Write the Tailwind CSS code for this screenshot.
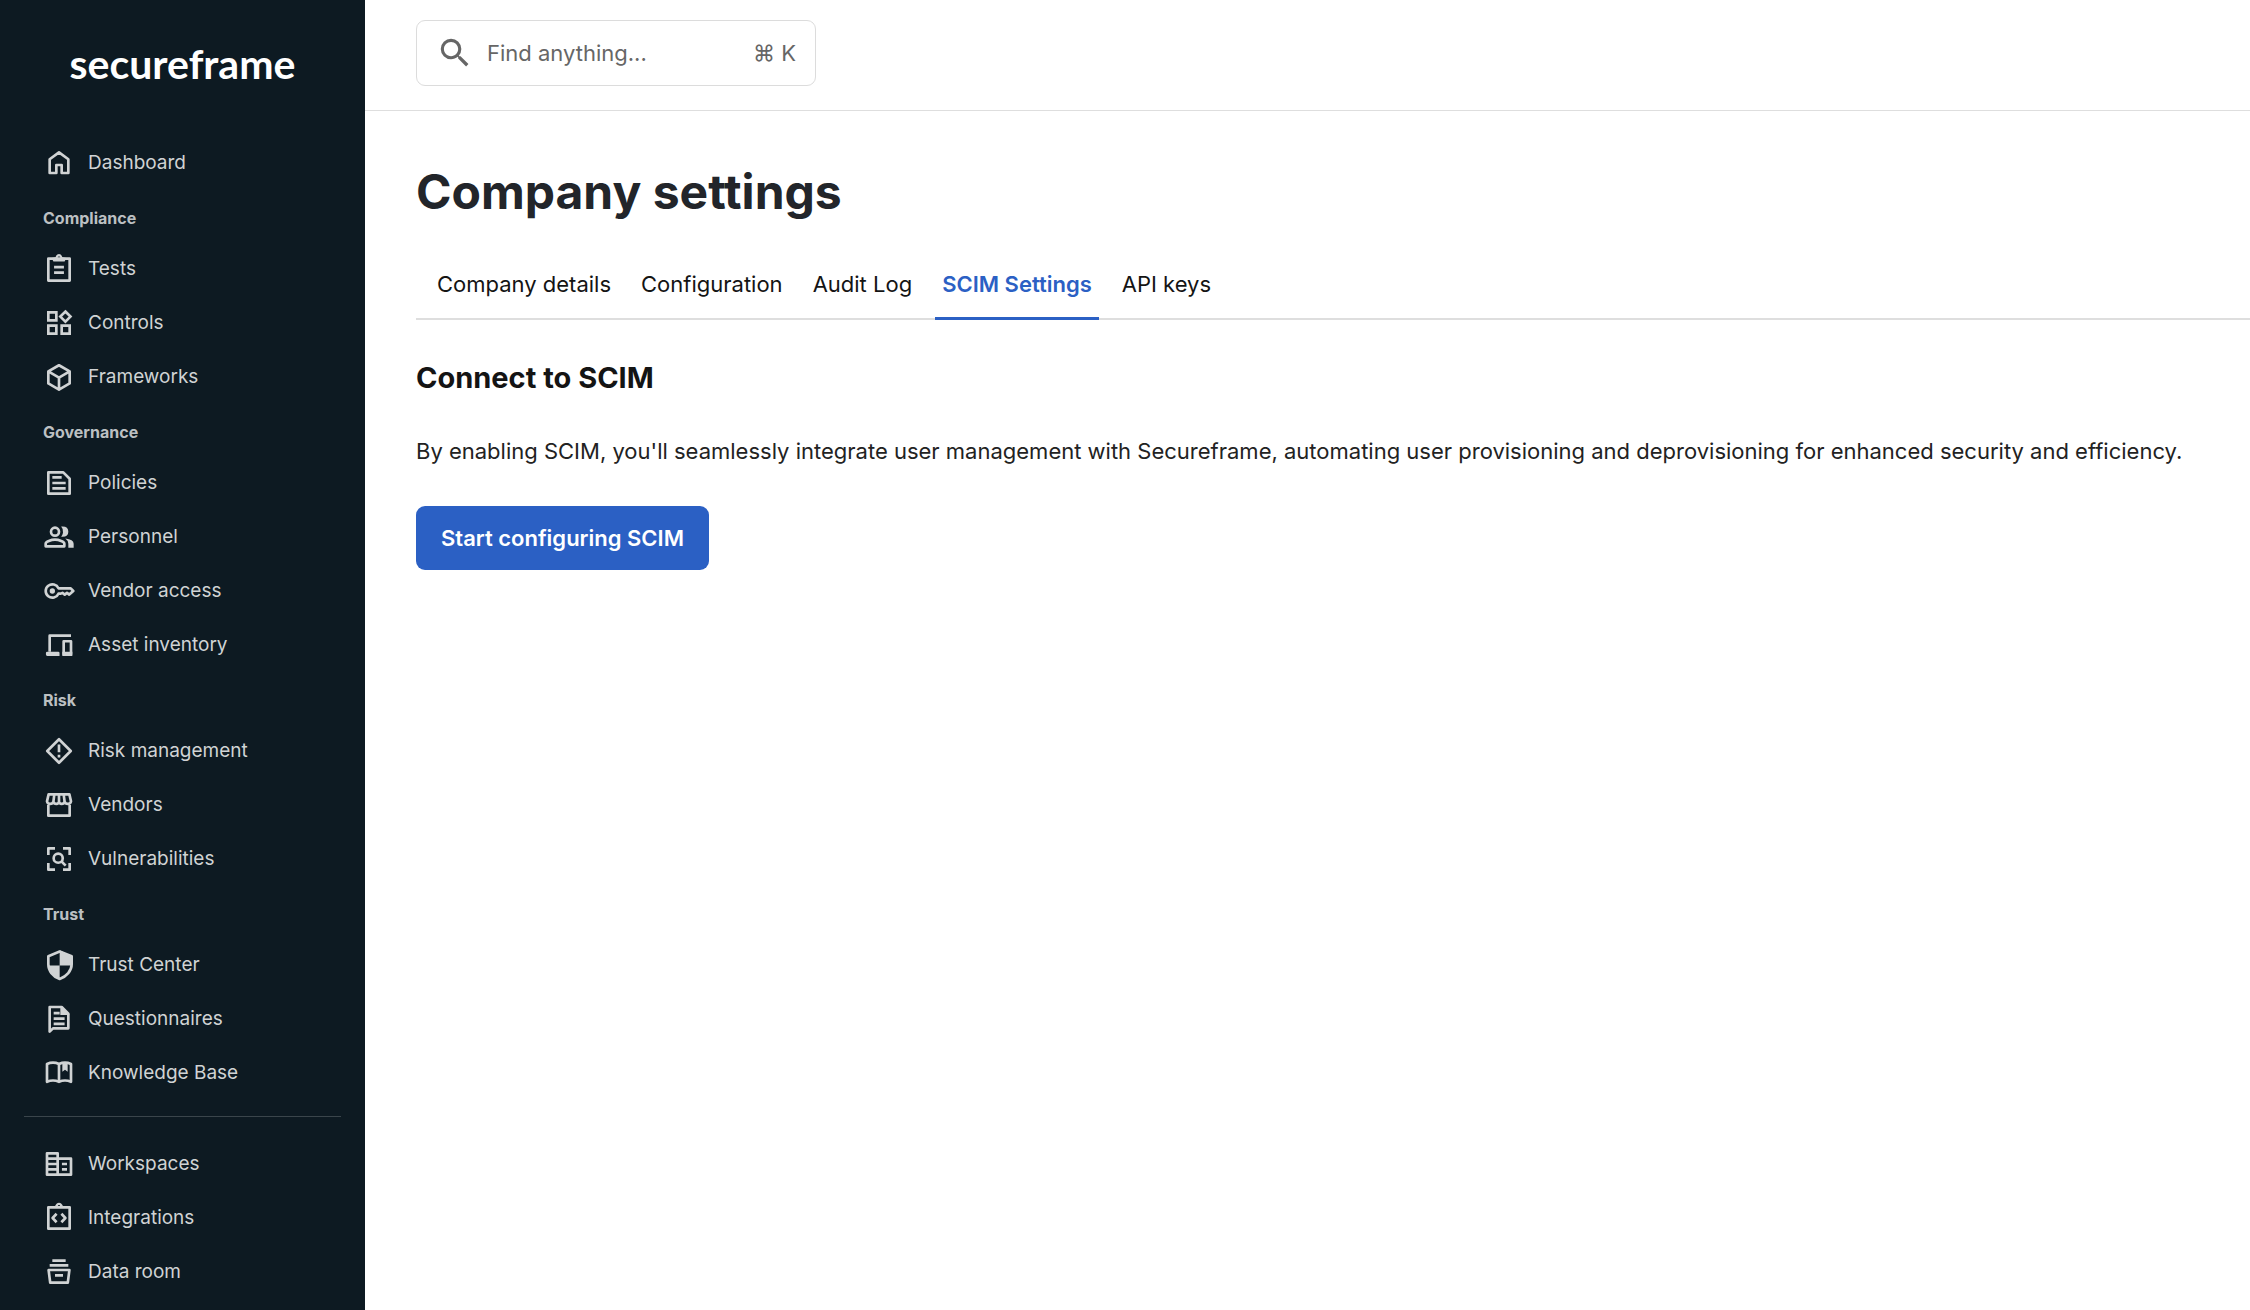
<!DOCTYPE html>
<html lang="en">
<head>
    <meta charset="UTF-8">
    <meta name="viewport" content="width=device-width, initial-scale=1.0">
    <title>Company settings - Secureframe</title>
    <script src="https://cdn.jsdelivr.net/npm/@tailwindcss/browser@4"></script>
</head>
<body class="flex min-h-screen bg-white font-[Inter,sans-serif] text-[#141414]">

    <!-- Sidebar -->
    <aside class="w-[365px] shrink-0 bg-[#0d1a22] text-[#d0d3d4]">
        <a href="#" class="flex h-[136px] justify-center pt-9 font-[Lato,sans-serif] text-[41px] leading-[56px] font-bold text-white">secureframe</a>

        <nav class="text-[19px] [&_a]:flex [&_a]:h-[54px] [&_a]:items-center [&_a]:gap-[13px] [&_a]:px-[43px] [&_a:hover]:text-white [&_h2]:flex [&_h2]:h-[52px] [&_h2]:items-center [&_h2]:px-[43px] [&_h2]:pt-1 [&_h2]:text-base [&_h2]:font-bold [&_h2]:text-[#bcc0c2] [&_svg]:size-8 [&_svg]:shrink-0 [&_svg]:fill-none [&_svg]:stroke-current [&_svg]:stroke-2">
            <a href="#">
                <svg viewBox="0 0 24 24" stroke-linejoin="round"><path d="M5 9.2 12 4l7 5.200V19.500h-5v-6h-4v6H5Z"/></svg>
                Dashboard
            </a>

            <h2>Compliance</h2>
            <a href="#">
                <svg viewBox="0 0 24 24" stroke-linejoin="round"><path d="M4 4.200h16V20.700H4Z"/><path d="M8.300 10.600h7.400M8.300 14.700h7.400"/><path fill="currentColor" stroke="none" fill-rule="evenodd" d="M6.500 3.800l2.900-.7Q10.200.8 12 .8t2.600 2.300l2.900.7-1.300 2.600H7.800ZM12 2.600a1 1 0 1 0 0 2 1 1 0 0 0 0-2Z"/></svg>
                Tests
            </a>
            <a href="#">
                <svg viewBox="0 0 24 24"><path d="M4 4h6v6H4ZM4 14h6v6H4ZM14 14h6v6h-6ZM16.800 3.400 20.600 7.200 16.800 11 13 7.200Z"/></svg>
                Controls
            </a>
            <a href="#">
                <svg viewBox="0 0 24 24" stroke-linejoin="round"><path d="M12 3.200 20 7.800v9L12 21.400 4 16.800v-9ZM4 7.800l8 4.600 8-4.600M12 12.400v9"/></svg>
                Frameworks
            </a>

            <h2>Governance</h2>
            <a href="#">
                <svg viewBox="0 0 24 24" stroke-linejoin="round"><path d="M4 4h11.200L20 8.800V20H4ZM7 7.800h7M7 12h10M7 16h10"/></svg>
                Policies
            </a>
            <a href="#">
                <svg viewBox="0 0 24 24" stroke-linejoin="round"><circle cx="9" cy="8" r="3"/><path d="M2 19v-2c0-1.400 4-3 7-3s7 1.600 7 3v2Z"/><path fill="currentColor" stroke="none" d="M13.600 4.200Q15.400 6 15 8.800 14.700 10.500 13.600 11.800 19 12.300 19 8T13.600 4.200ZM16.700 13.200Q19 14.800 19 17v3h4v-3Q23 14 16.700 13.200Z"/></svg>
                Personnel
            </a>
            <a href="#">
                <svg viewBox="0 0 24 24" stroke-linejoin="round"><path d="M11.600 10H20.800L22.700 12l-3 2.700-1.700-1.300-1.700 1.300-1.700-1.300-1.200.6h-1.800a5 5 0 1 1 0-4Z"/><circle cx="7" cy="12" r="2" fill="currentColor" stroke="none"/></svg>
                Vendor access
            </a>
            <a href="#">
                <svg viewBox="0 0 24 24" stroke-linejoin="round"><path d="M21 5H5v12M15.500 9.200H21V19h-5.500Z"/><path fill="currentColor" stroke="none" d="M3.200 17h8.200a1 1 0 0 1 1 1v2.200H3.200a1 1 0 0 1-1-1V18a1 1 0 0 1 1-1ZM14.500 17H22v3.200h-7.500Z"/></svg>
                Asset inventory
            </a>

            <h2>Risk</h2>
            <a href="#">
                <svg viewBox="0 0 24 24" stroke-linejoin="round"><path d="M12 3.200 20.800 12 12 20.800 3.200 12ZM12 7.200v5.800M12 14.800v2"/></svg>
                Risk management
            </a>
            <a href="#">
                <svg viewBox="0 0 24 24" stroke-linejoin="round"><path d="M4 12v8h16v-8"/><path d="M4.200 4h15.600L21 9.300Q20.700 11.200 18.700 11.200T16.200 9.500Q15.800 11.200 14 11.200T12 9.500Q11.800 11.200 10 11.200T7.800 9.500Q7.300 11.200 5.300 11.200T3 9.300ZM8.500 4l-.7 5.500M12 4v5.500M15.500 4l.7 5.500"/></svg>
                Vendors
            </a>
            <a href="#">
                <svg viewBox="0 0 24 24" stroke-linejoin="round"><path d="M4 9V4h5M15 4h5v5M20 15v5h-5M9 20H4v-5"/><circle cx="11.400" cy="11.400" r="3.400"/><path d="m13.800 13.800 3.200 3.200"/></svg>
                Vulnerabilities
            </a>

            <h2>Trust</h2>
            <a href="#">
                <svg viewBox="0 0 24 24" stroke-linejoin="round"><path d="m12.500 1.900 9 3.600v6c0 4.800-3.800 9.200-9 11-5.200-1.800-8.500-6.200-8.500-11v-6Z"/><path fill="currentColor" stroke="none" d="M12.500 1v11.300h9V5.500ZM12.500 12.300H4q.5 6.500 8.500 10.200Z"/></svg>
                Trust Center
            </a>
            <a href="#">
                <svg viewBox="0 0 24 24" stroke-linejoin="round"><path d="M5 3h9l5 5v11H7.500L5 21.500ZM8 7.600h4.500M8 11.700h8.200M8 15.600h8.200"/><path fill="currentColor" stroke="none" d="M13 2v7h7Z"/></svg>
                Questionnaires
            </a>
            <a href="#">
                <svg viewBox="0 0 24 24" stroke-linejoin="round"><path d="M3 5.200q4.500-2 9 0 4.500-2 9 0v13.400q-4.500-2-9 0-4.500-2-9 0ZM12 5v13.600"/><path fill="currentColor" stroke="none" d="M14.500 4h4v7l-2-1.400-2 1.400Z"/></svg>
                Knowledge Base
            </a>

            <hr class="mx-6 mt-4 mb-5 border-[#3a454b]">

            <a href="#">
                <svg viewBox="0 0 24 24" stroke-linejoin="round"><path d="M3 4h8v16H3ZM11 8h10v12H11M3 8h8M3 12h8M3 16h8M14.200 12H18M14.200 16H18"/></svg>
                Workspaces
            </a>
            <a href="#">
                <svg viewBox="0 0 24 24" stroke-linejoin="round"><path d="M4 4h16V20H4ZM10.200 8.800 7.200 12l3 3.200M13.800 8.800l3 3.200-3 3.200"/><path fill="currentColor" stroke="none" fill-rule="evenodd" d="M8.800 3.500Q10 .6 12 .6t3.200 2.900ZM12 2.200a.9.900 0 1 0 0 1.800.9.900 0 0 0 0-1.800Z"/></svg>
                Integrations
            </a>
            <a href="#">
                <svg viewBox="0 0 24 24" stroke-linejoin="round"><path d="M4.200 10.500h15.600l-1.200 9.500H5.400ZM7 3.500h10M5 7h14M9 14.500h6"/></svg>
                Data room
            </a>
        </nav>
    </aside>

    <div class="min-w-0 grow">
        <!-- Top bar -->
        <header class="h-[111px] border-b border-[#dedede] px-[51px] pt-5">
            <label class="flex h-[66px] w-[400px] items-center rounded-[9px] border border-[#dcdcdc] px-[19px] text-[22px] text-[#666]">
                <svg class="size-[38px] shrink-0 fill-current" viewBox="0 0 24 24" aria-hidden="true"><path d="M15.500 14h-.79l-.28-.27A6.471 6.471 0 0 0 16 9.500 6.500 6.500 0 1 0 9.500 16c1.610 0 3.090-.59 4.230-1.570l.27.28v.79l5 4.990L20.490 19l-4.990-5zm-6 0C7.010 14 5 11.990 5 9.500S7.010 5 9.500 5 14 7.010 14 9.500 11.990 14 9.500 14z"/></svg>
                <input type="search" aria-label="Find anything" placeholder="Find anything..." class="ml-[13px] w-full min-w-0 grow outline-none placeholder:text-[#666]">
                <kbd class="shrink-0 font-[Inter,sans-serif] text-[22px]">⌘ K</kbd>
            </label>
        </header>

        <!-- Page -->
        <main class="pl-[51px] text-[22px]">
            <h1 class="pt-[51px] text-[48px] leading-[60px] font-bold text-[#22252a]">Company settings</h1>

            <nav class="mt-[34px] flex gap-4 border-b-2 border-[#dedede] pl-3.5 [&_a]:-mb-0.5 [&_a]:h-[64px] [&_a]:border-b-3 [&_a]:border-transparent [&_a]:px-[7px] [&_a]:leading-[56px]">
                <a href="#">Company details</a>
                <a href="#">Configuration</a>
                <a href="#">Audit Log</a>
                <a href="#" aria-current="page" class="border-[#2b60c4]! font-semibold text-[#2b60c4]">SCIM Settings</a>
                <a href="#">API keys</a>
            </nav>

            <section>
                <h2 class="mt-10 text-[29px] leading-9 font-bold">Connect to SCIM</h2>
                <p class="mt-[38px] leading-[34px] text-[#222]">By enabling SCIM, you'll seamlessly integrate user management with Secureframe, automating user provisioning and deprovisioning for enhanced security and efficiency.</p>
                <button type="button" class="mt-[38px] h-16 rounded-[9px] bg-[#2b60c4] px-[25px] font-semibold text-white hover:bg-[#2452ab]">Start configuring SCIM</button>
            </section>
        </main>
    </div>

</body>
</html>
